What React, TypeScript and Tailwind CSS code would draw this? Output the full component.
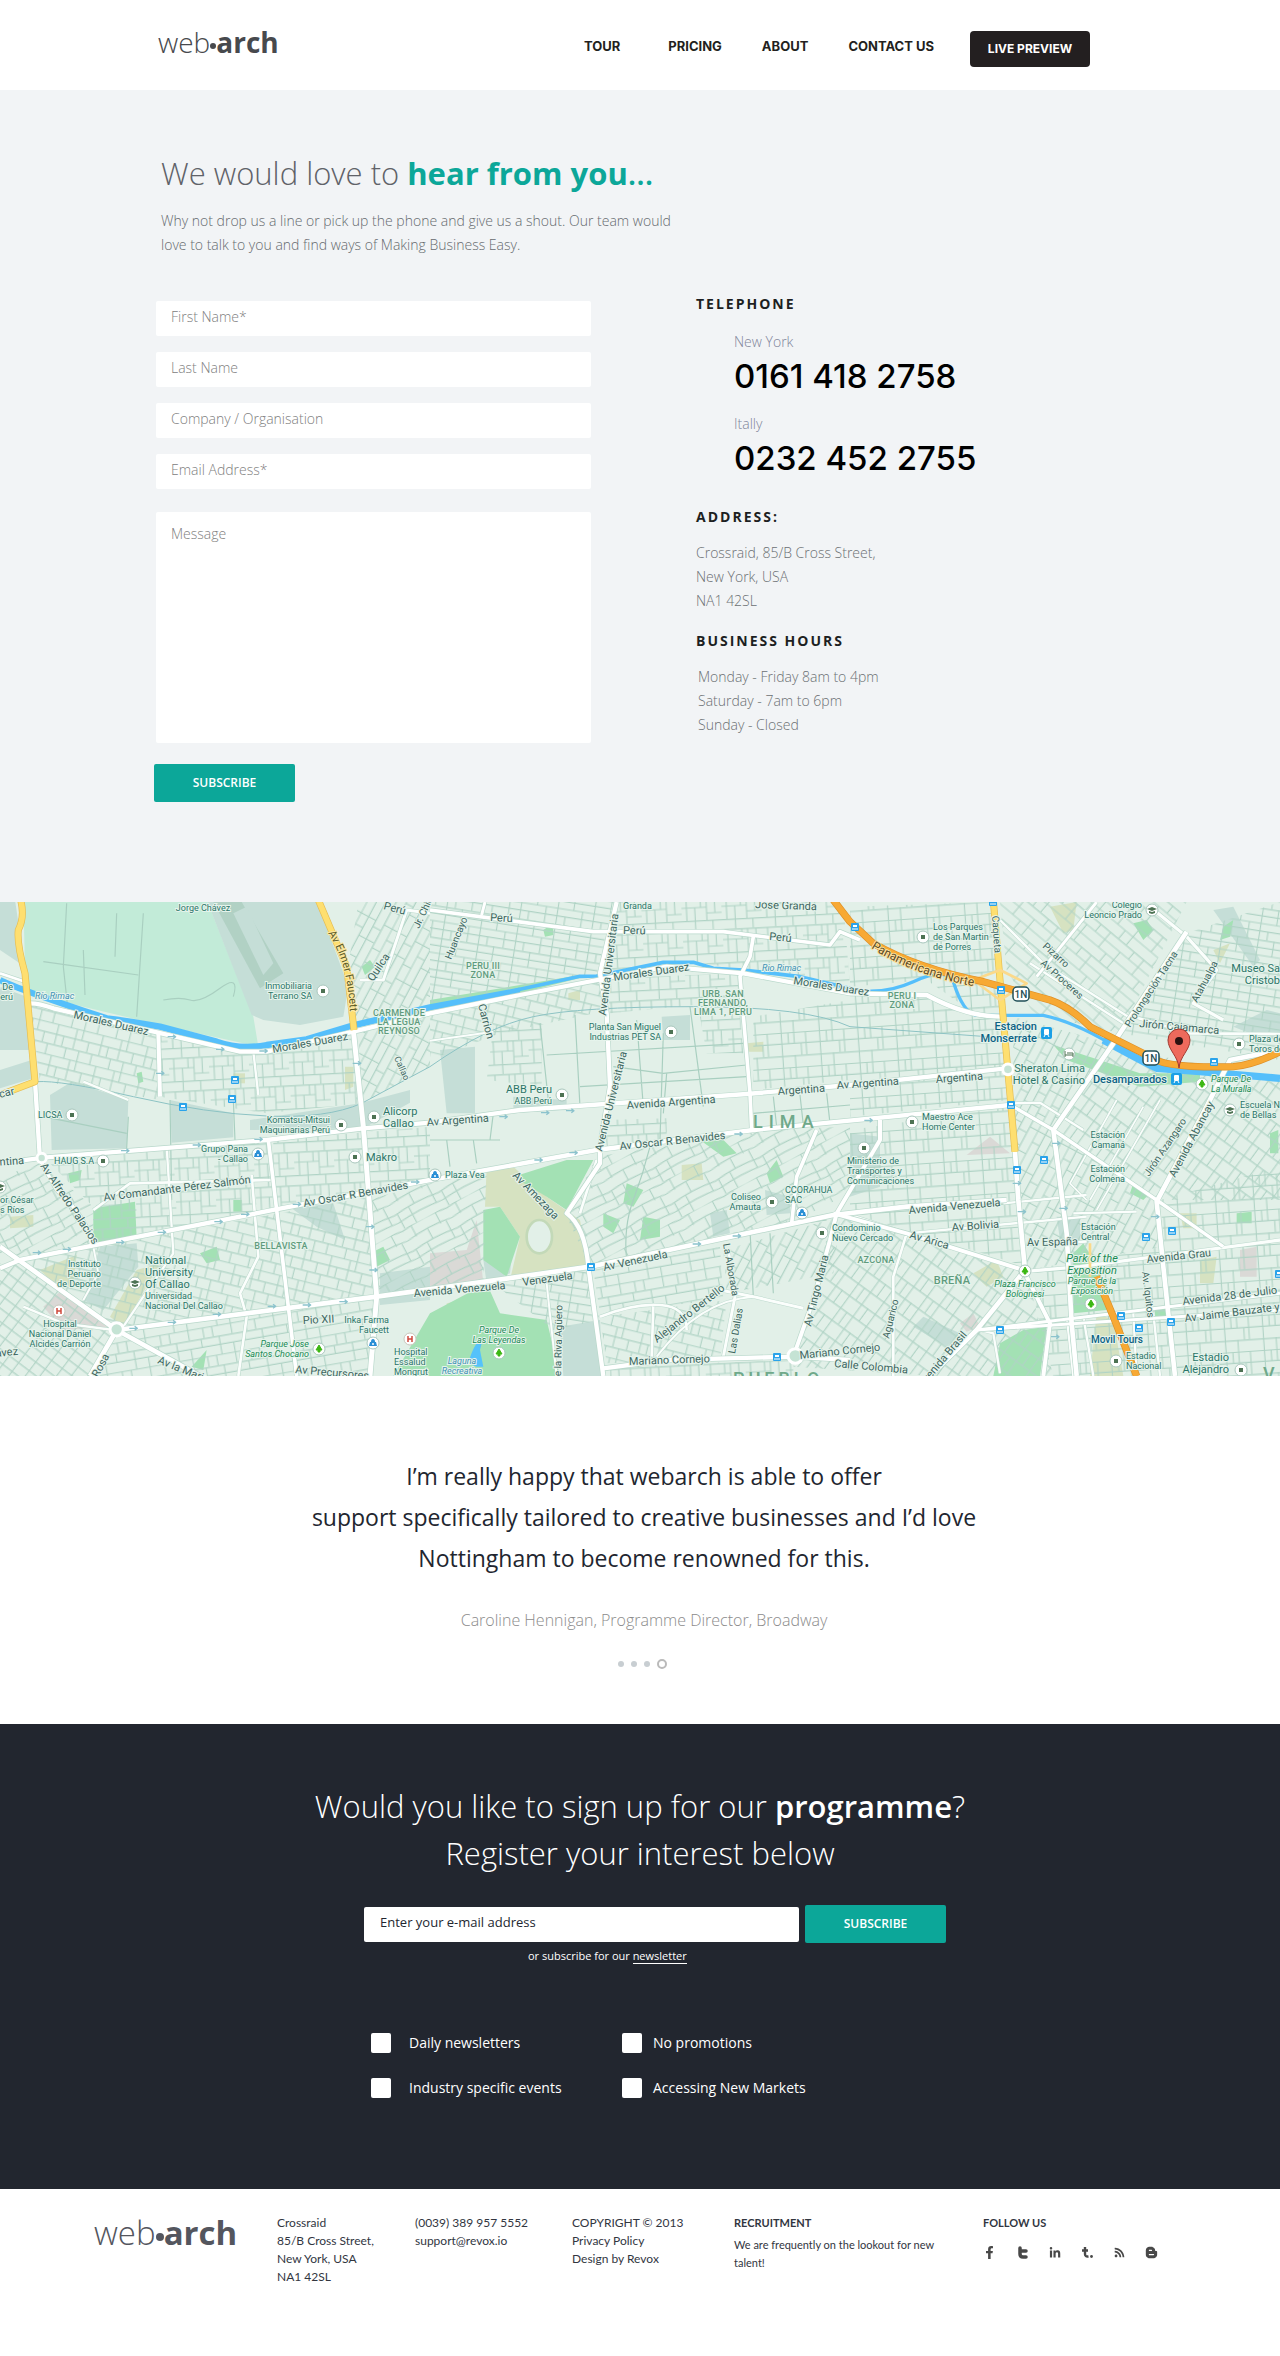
import React from "react";
import { FaFacebookF, FaLinkedinIn, FaBloggerB, FaRss } from "react-icons/fa";

type Road = { d: string; w?: number };

/* Map geometry is drawn on a grid three times finer than the labels. */
const districts: { pts: string; tile: string }[] = [
  { pts: "90,310 470,400 480,600 250,560 120,545", tile: "a" },
  { pts: "480,400 700,455 1060,400 1085,610 800,640 480,590", tile: "b" },
  { pts: "1075,6 1290,6 1290,320 1070,380 1035,260", tile: "c" },
  { pts: "1075,400 1290,330 1290,500 1085,610", tile: "c" },
  { pts: "0,830 120,790 280,920 280,1040 60,1080 0,1060", tile: "d" },
  { pts: "130,770 810,720 820,930 280,1040 280,920", tile: "b" },
  { pts: "280,1040 1110,890 1130,1190 340,1290 60,1080", tile: "a" },
  { pts: "820,720 1290,680 1290,840 820,930", tile: "b" },
  { pts: "1100,900 1290,850 1460,810 1450,1150 1130,1190", tile: "d" },
  { pts: "0,1090 60,1080 340,1290 270,1428 0,1428", tile: "e" },
  { pts: "340,1300 1130,1190 1110,1428 270,1428", tile: "f" },
  { pts: "1290,6 1840,6 1790,225 1560,270 1290,310", tile: "g" },
  { pts: "1840,6 2530,6 2550,260 2080,185 1800,225", tile: "b" },
  { pts: "1290,340 1800,235 1830,330 1500,400 1290,480", tile: "a" },
  { pts: "1820,235 2220,220 2230,320 2080,315 1830,340", tile: "b" },
  { pts: "1480,380 1625,370 1625,560 1460,540", tile: "b" },
  { pts: "2260,350 2550,300 2550,540 2260,570", tile: "h" },
  { pts: "2100,350 2220,340 2230,460 2120,460", tile: "b" },
  { pts: "1790,770 2250,690 2550,680 2550,880 2370,970 1770,1100 1700,950", tile: "d" },
  { pts: "1810,660 2000,655 2000,730 1820,740", tile: "b" },
  { pts: "1780,1110 2160,1040 2170,1200 1960,1220 1800,1240", tile: "f" },
  { pts: "1480,1150 1760,1110 1800,1260 1660,1290", tile: "g" },
  { pts: "1800,1250 2180,1200 2160,1380 1820,1390", tile: "a" },
  { pts: "2170,1050 2520,950 2500,1120 2180,1180", tile: "c" },
  { pts: "2500,940 3070,1110 2920,1300 2800,1428 2380,1400", tile: "i" },
  { pts: "1830,1400 2380,1380 2380,1428 1830,1428", tile: "b" },
  { pts: "2550,20 2980,6 3010,340 2930,345 2780,240 2550,260", tile: "h" },
  { pts: "3000,6 3560,6 3360,400 3100,340 3020,210", tile: "j" },
  { pts: "3560,100 3840,6 3840,480 3360,400", tile: "g" },
  { pts: "2550,280 2780,280 2940,350 3010,360 3030,600 2550,650", tile: "h" },
  { pts: "2550,690 3030,620 3080,1100 2550,940", tile: "h" },
  { pts: "3040,350 3330,430 3160,690 3040,620", tile: "c" },
  { pts: "3340,440 3840,540 3840,900 3470,900 3170,690", tile: "i" },
  { pts: "3040,620 3170,700 3470,910 3490,1040 3080,1110", tile: "c" },
  { pts: "3080,1110 3490,1040 3520,1428 3160,1428", tile: "h" },
  { pts: "3480,900 3840,800 3840,1428 3530,1428", tile: "h" },
  { pts: "2800,1428 3080,1120 3160,1428", tile: "i" },
];

const greyAreas = [
  "620,0 950,0 1045,260 1030,350 900,375 790,360 755,345",
  "0,0 45,0 75,200 0,150",
  "0,260 80,290 90,450 0,450",
  "0,510 95,480 100,535 0,565",
  "150,585 215,545 385,600 380,745 155,750",
  "510,600 700,640 700,712 515,728",
  "750,660 1080,610 1230,570 1230,608 1090,685 750,690",
  "875,925 1000,910 1035,1020 950,980",
  "300,1040 410,1030 415,1100 310,1230 250,1200",
  "1320,450 1425,440 1425,640 1340,640",
  "1985,350 2070,345 2070,420 1990,420",
  "1540,590 1700,600 1700,630 1540,640",
  "1450,1080 1540,1030 1530,1120 1460,1150",
  "1680,1280 1800,1260 1810,1428 1690,1428",
  "2130,940 2180,930 2190,1000 2140,1010",
  "2550,700 2640,710 2640,860 2550,890",
  "3640,30 3700,20 3780,180 3760,200",
  "3700,380 3800,330 3840,340 3840,420 3750,400",
  "3170,950 3240,950 3240,1020 3180,1020",
  "2295,870 2370,890 2370,940 2300,945",
  "1140,1120 1290,1100 1290,1200 1140,1215",
  "2770,1250 2880,1300 2840,1340 2740,1280",
];

const greenAreas = [
  "280,925 405,905 410,1015 280,1040",
  "1290,1240 1460,1150 1500,1240 1640,1260 1680,1428 1180,1428",
  "1450,930 1500,920 1560,1010 1520,1130 1450,1080",
  "1085,200 1110,180 1125,200 1095,225",
  "600,1060 650,1040 660,1080 620,1090",
  "3220,1060 3250,1030 3280,1080 3320,1160 3320,1230 3220,1240",
  "3000,1330 3070,1290 3140,1280 3120,1428 2980,1428",
  "2300,820 2330,780 2350,830 2310,850",
  "1930,950 1980,960 1980,1010 1920,1020",
  "1810,940 1860,960 1840,1000 1810,980",
  "1880,850 1930,870 1900,920 1870,910",
  "3400,850 3450,880 3430,900 3390,880",
  "1290,300 1560,255 1740,225 1740,234 1560,280 1290,314",
  "3160,435 3420,520 3600,520 3600,545 3420,560 3200,480",
  "3400,70 3440,60 3460,90 3430,120",
  "3670,80 3700,60 3690,110 3660,120",
  "1110,1060 1150,1040 1170,1080 1130,1100",
  "205,820 245,810 240,840 210,850",
  "2100,720 2150,700 2210,760 2170,770",
  "700,900 725,900 725,935 700,935",
  "410,520 425,515 430,545 415,550",
  "1630,90 1660,70 1660,105 1635,110",
  "3810,700 3835,690 3835,760 3810,760",
  "3710,940 3755,935 3755,970 3710,970",
  "3465,1225 3505,1220 3505,1255 3465,1260",
  "575,1400 620,1350 610,1410",
  "1540,830 1700,780 1780,780 1700,930 1640,890",
];

const sandAreas = [
  "1460,805 1540,800 1640,890 1740,960 1765,1095 1530,1140 1560,1010 1500,920 1455,920",
  "410,1110 480,1090 370,1280 330,1250",
  "30,950 100,945 100,980 30,985",
  "120,1110 230,1065 220,1150 180,1170",
  "1035,500 1060,500 1060,560 1035,570",
  "2240,430 2290,425 2290,455 2240,455",
  "2045,795 2105,790 2110,840 2045,840",
  "3150,20 3230,6 3220,90 3190,100",
  "2920,1120 2990,1080 3010,1130 2960,1160",
  "3600,1080 3650,1070 3640,1150 3600,1150",
  "3290,1240 3340,1260 3370,1428 3270,1428",
  "3640,150 3690,130 3660,190",
  "3540,940 3590,940 3590,985 3550,985",
  "1705,280 1740,270 1740,300 1705,300",
  "700,520 735,520 735,550 700,550",
  "1340,1210 1440,1190 1430,1220 1340,1225",
];

const roseAreas = [
  "180,1175 325,1280 190,1290 130,1220",
  "1290,1060 1400,1050 1430,960 1450,1150 1290,1160",
  "2970,710 3030,760 2900,765",
  "3720,1050 3770,1040 3770,1130 3720,1130",
  "2880,1270 2920,1240 2940,1280 2900,1295",
];

const alleys = [
  "M200,10 190,200 205,340 M130,185 415,225 M250,150 255,285 M350,40 345,170 M430,40 410,350",
  "M490,300 Q540,290 570,300 T660,265 700,290",
  "M1620,370 1645,600 M1725,345 1740,620 M1640,465 2230,430 M1840,500 1990,520 2240,495 M1980,720 1990,400",
  "M1910,360 1930,620 M2070,320 2110,620 M2000,520 1990,640 M1740,560 2240,530",
  "M510,600 515,900 M700,600 705,720 M385,650 380,745 M130,650 380,700",
  "M1880,1080 Q1870,980 1900,900 T1950,740",
  "M1290,720 1500,720 M1470,720 1480,640 M1340,720 1350,800 M1420,720 1430,790",
  "M2200,1000 2480,960 M2310,1000 2320,1180 M2250,990 2260,1190",
  "M2320,590 2330,680 M2400,585 2410,675 M2480,580 2490,670 M2260,640 2550,615",
];

const rails = [
  "M110,545 Q180,540 400,590 T800,648 1085,610 L1290,500 Q1460,380 1600,350 T2080,320 2550,380 L2960,410",
];

const minorRoads: Road[] = [
  { d: "M760,455 775,585" },
  { d: "M250,545 385,600" },
  { d: "M755,825 775,1070 720,1180 740,1250 715,1428", w: 8 },
  { d: "M430,1190 370,1280" },
  { d: "M500,740 520,1060 430,1190", w: 7 },
  { d: "M280,1040 295,1120 250,1200", w: 6 },
  { d: "M280,930 390,850 820,840", w: 8 },
  { d: "M70,1220 190,1270 340,1290", w: 7 },
  { d: "M1080,240 1150,240 1220,30 1290,40", w: 9 },
  { d: "M1740,940 1790,780", w: 8 },
  { d: "M1960,1220 1955,1370 M1800,1250 Q1900,1210 1980,1215 T2060,1290", w: 8 },
  { d: "M2185,1050 2205,1190 2170,1370", w: 9 },
  { d: "M2160,1170 2260,1190 2410,1225", w: 9 },
  { d: "M2260,1190 Q2100,1200 1970,1370", w: 6 },
  { d: "M1290,422 1480,395", w: 6 },
  { d: "M1640,1150 1670,1428", w: 6 },
  { d: "M3220,940 3410,935 M3010,910 3260,885 M2720,1000 3260,950 M3180,1030 3260,1025", w: 7 },
  { d: "M3070,1115 3240,1100 3840,1020", w: 10 },
  { d: "M3200,1250 3220,1428 M3250,1250 3280,1428 M3400,1240 3410,1428 M3460,1240 3480,1428", w: 7 },
  { d: "M2550,945 2720,1000 2680,1130 2680,1428", w: 8 },
  { d: "M3000,60 3130,190 3400,360 M3090,190 3370,370", w: 7 },
  { d: "M3000,1420 2980,1300 2940,1290", w: 7 },
  { d: "M3260,900 3210,850 3350,600 M3270,900 3430,620 M3290,930 3480,600", w: 5 },
  { d: "M3040,610 3120,608 3250,690", w: 7 },
  { d: "M3400,350 3570,400 3840,402", w: 8 },
  { d: "M3450,20 3560,110 3650,210 3580,310 3670,360", w: 10 },
];

const majorRoads: Road[] = [
  { d: "M0,220 75,245", w: 8 },
  { d: "M90,310 Q120,310 160,325 L720,455 800,455 1060,395 1290,340 1560,285 2000,200 2230,220 2550,280 2780,285 Q2900,350 3000,350", w: 13 },
  { d: "M475,400 480,590", w: 12 },
  { d: "M1060,390 1090,680 1130,1190 1110,1428", w: 15 },
  { d: "M105,545 120,780 M0,790 130,773 800,720 1090,685 1290,668 1560,630 2240,582 2550,555 3020,505", w: 13 },
  { d: "M120,780 170,870 Q270,960 275,1040", w: 10 },
  { d: "M0,1105 60,1080 820,930 1290,840 1790,750 2260,690 3030,615", w: 13 },
  { d: "M805,720 830,930 890,1428", w: 11 },
  { d: "M0,1040 350,1290 600,1428", w: 14 },
  { d: "M270,1428 350,1290 1130,1190 1560,1130 1770,1100 2500,945 2720,920 3020,900", w: 14 },
  { d: "M1850,6 1800,220 1820,340 1830,560 1800,740 1800,790 1700,940 Q1755,980 1765,1100 L1810,1428", w: 13 },
  { d: "M1290,30 1780,95 2170,95 2490,135 2520,95 2580,120", w: 11 },
  { d: "M2260,110 2250,170 2220,230 2250,580 2255,690", w: 11 },
  { d: "M1455,6 1445,45", w: 9 },
  { d: "M2450,690 2390,830 2375,970", w: 11 },
  { d: "M2640,660 2640,720 2510,940 2490,1020 2440,1200 2380,1370", w: 12 },
  { d: "M1810,1405 2000,1380 2380,1370 2550,1380", w: 13 },
  { d: "M2500,940 2720,1000 3070,1110 3150,1270 3130,1428", w: 12 },
  { d: "M3035,610 3055,900 3075,1110 2930,1290 2790,1428", w: 14 },
  { d: "M2930,1290 3260,1250 3840,1180 M2930,1290 3840,1230", w: 9 },
  { d: "M3560,95 3340,430 3160,690 3200,1000 3215,1270 3230,1428", w: 14 },
  { d: "M3040,620 3160,690 3470,900 3670,1040", w: 10 },
  { d: "M3840,450 3690,480 3620,620 3470,905 3490,1100 3525,1428", w: 14 },
  { d: "M3290,6 3110,230", w: 9 },
];

const arrows = [
  [515, 410], [660, 448], [790, 453], [480, 520], [1070, 490], [375, 752], [590, 735], [775, 718], [485, 997], [360, 1027],
  [110, 1058], [200, 1048], [655, 965], [735, 943], [890, 913], [1245, 846], [1110, 980], [1120, 1110], [400, 1285], [515, 1267],
  [650, 1243], [815, 1219], [920, 1215], [1030, 1205], [1510, 650], [1635, 638], [1710, 632], [1615, 780], [1720, 758], [2215, 702],
  [2090, 1032], [2210, 1008], [2605, 661], [3050, 850], [3065, 935], [3190, 925], [3168, 730], [3465, 950], [3165, 1310],
];

type Label = {
  t: string | string[];
  x: number;
  y: number;
  s?: number;
  r?: number;
  a?: "start" | "middle" | "end";
  k?: "road" | "place" | "area" | "park" | "water" | "station";
};

const labels: Label[] = [
  { t: "Jorge Chávez", x: 203, y: 9, s: 9, a: "middle" },
  { t: ["Inmobiliaria", "Terrano SA"], x: 312, y: 87, s: 9, a: "end" },
  { t: ["› De", "erú"], x: 13, y: 88, s: 9, a: "end" },
  { t: "LICSA", x: 38, y: 216, s: 9 },
  { t: "HAUG S.A", x: 54, y: 262, s: 9 },
  { t: ["Komatsu-Mitsui", "Maquinarias Perú"], x: 330, y: 221, s: 9, a: "end" },
  { t: ["Grupo Pana", "- Callao"], x: 248, y: 250, s: 9, a: "end" },
  { t: ["Alicorp", "Callao"], x: 383, y: 213, s: 11 },
  { t: "Makro", x: 366, y: 259, s: 11 },
  { t: ["or César", "s Ríos"], x: 0, y: 301, s: 9 },
  { t: ["Instituto", "Peruano", "de Deporte"], x: 101, y: 365, s: 9, a: "end" },
  { t: ["National", "University", "Of Callao"], x: 145, y: 362, s: 11 },
  { t: ["Universidad", "Nacional Del Callao"], x: 145, y: 397, s: 9 },
  { t: ["Hospital", "Nacional Daniel", "Alcides Carrión"], x: 60, y: 425, s: 9, a: "middle" },
  { t: ["Inka Farma", "Faucett"], x: 389, y: 421, s: 9, a: "end" },
  { t: ["Hospital", "Essalud", "Mongrut"], x: 394, y: 453, s: 9 },
  { t: ["Planta San Miguel", "Industrias PET SA"], x: 661, y: 128, s: 9, a: "end" },
  { t: "ABB Peru", x: 552, y: 191, s: 11, a: "end" },
  { t: "ABB Perú", x: 552, y: 202, s: 9, a: "end" },
  { t: "Plaza Vea", x: 445, y: 276, s: 9 },
  { t: "Granda", x: 623, y: 7, s: 9 },
  { t: ["Coliseo", "Amauta"], x: 761, y: 298, s: 9, a: "end" },
  { t: ["CCORAHUA", "SAC"], x: 785, y: 291, s: 9 },
  { t: ["Ministerio de", "Transportes y", "Comunicaciones"], x: 847, y: 262, s: 9 },
  { t: ["Condominio", "Nuevo Cercado"], x: 832, y: 329, s: 9 },
  { t: ["Los Parques", "de San Martin", "de Porres"], x: 933, y: 28, s: 9 },
  { t: ["Colegio", "Leoncio Prado"], x: 1142, y: 6, s: 9, a: "end" },
  { t: ["Museo Sa", "Cristob"], x: 1280, y: 70, s: 11, a: "end" },
  { t: ["Plaza de", "Toros de"], x: 1249, y: 140, s: 9 },
  { t: ["Escuela N", "de Bellas"], x: 1240, y: 206, s: 9 },
  { t: ["Sheraton Lima", "Hotel & Casino"], x: 1085, y: 170, s: 11, a: "end" },
  { t: ["Maestro Ace", "Home Center"], x: 922, y: 218, s: 9 },
  { t: ["Estación", "Camaná"], x: 1125, y: 236, s: 9, a: "end" },
  { t: ["Estación", "Colmena"], x: 1125, y: 270, s: 9, a: "end" },
  { t: ["Estación", "Central"], x: 1081, y: 328, s: 9 },
  { t: ["Estadio", "Nacional"], x: 1126, y: 457, s: 9 },
  { t: ["Estadio", "Alejandro"], x: 1229, y: 459, s: 11, a: "end" },
  { t: ["Estacion", "Monserrate"], x: 1037, y: 128, s: 11, a: "end", k: "station" },
  { t: "Desamparados", x: 1167, y: 181, s: 11, a: "end", k: "station" },
  { t: "Movil Tours", x: 1091, y: 441, s: 10, k: "station" },
  { t: ["Parque Jose", "Santos Chocano"], x: 309, y: 445, s: 9, a: "end", k: "park" },
  { t: ["Parque De", "Las Leyendas"], x: 499, y: 431, s: 9, a: "middle", k: "park" },
  { t: ["Parque De", "La Muralla"], x: 1211, y: 180, s: 9, k: "park" },
  { t: ["Park of the", "Exposition"], x: 1092, y: 360, s: 11, a: "middle", k: "park" },
  { t: ["Parque de la", "Exposición"], x: 1092, y: 382, s: 9, a: "middle", k: "park" },
  { t: ["Plaza Francisco", "Bolognesi"], x: 1025, y: 385, s: 9, a: "middle", k: "park" },
  { t: ["Laguna", "Recreativa"], x: 462, y: 462, s: 9, a: "middle", k: "water" },
  { t: "Río Rimac", x: 35, y: 97, s: 9, k: "water" },
  { t: "Rio Rimac", x: 762, y: 69, s: 9, k: "water" },
  { t: ["CARMEN DE", "LA LEGUA", "REYNOSO"], x: 399, y: 114, s: 9, a: "middle", k: "area" },
  { t: "BELLAVISTA", x: 281, y: 347, s: 9, a: "middle", k: "area" },
  { t: ["PERU III", "ZONA"], x: 483, y: 67, s: 9, a: "middle", k: "area" },
  { t: ["URB. SAN", "FERNANDO,", "LIMA 1, PERU"], x: 723, y: 95, s: 9, a: "middle", k: "area" },
  { t: ["PERU I", "ZONA"], x: 902, y: 97, s: 9, a: "middle", k: "area" },
  { t: "AZCONA", x: 876, y: 361, s: 9, a: "middle", k: "area" },
  { t: "BREÑA", x: 952, y: 382, s: 11, a: "middle", k: "area" },
  { t: "Morales Duarez", x: 73, y: 116, r: 13, k: "road" },
  { t: "Morales Duarez", x: 273, y: 151, r: -10, k: "road" },
  { t: "Morales Duarez", x: 614, y: 79, r: -8, k: "road" },
  { t: "Morales Duarez", x: 793, y: 82, r: 9, k: "road" },
  { t: "Quilca", x: 373, y: 80, r: -56, k: "road" },
  { t: "Callao", x: 394, y: 156, s: 9, r: 66, k: "road" },
  { t: "Jr. Chic", x: 419, y: 27, s: 10, r: -65, k: "road" },
  { t: "Perú", x: 383, y: 7, r: 15, k: "road" },
  { t: "entina", x: -6, y: 264, r: -4, k: "road" },
  { t: "car", x: 0, y: 196, r: -14, k: "road" },
  { t: "avez", x: -4, y: 455, r: -6, k: "road" },
  { t: "Av Alfredo Palacios", x: 40, y: 264, r: 56, k: "road" },
  { t: "Av Comandante Pérez Salmón", x: 104, y: 299, r: -7, k: "road" },
  { t: "Av Oscar R Benavides", x: 304, y: 305, r: -10, k: "road" },
  { t: "Av Oscar R Benavides", x: 620, y: 248, r: -6, k: "road" },
  { t: "Pio XII", x: 303, y: 422, r: -3, k: "road" },
  { t: "Av la Marina", x: 157, y: 461, r: 22, k: "road" },
  { t: "Av Precursores", x: 295, y: 471, r: 5, k: "road" },
  { t: "Rosa", x: 98, y: 476, r: -62, k: "road" },
  { t: "Avenida Venezuela", x: 414, y: 395, r: -5, k: "road" },
  { t: "Venezuela", x: 523, y: 384, r: -8, k: "road" },
  { t: "Av Venezuela", x: 604, y: 369, r: -12, k: "road" },
  { t: "Perú", x: 490, y: 19, r: 3, k: "road" },
  { t: "Perú", x: 623, y: 32, r: 1, k: "road" },
  { t: "Perú", x: 769, y: 38, r: 5, k: "road" },
  { t: "Jose Granda", x: 755, y: 6, r: 2, k: "road" },
  { t: "Huancayo", x: 451, y: 58, s: 10, r: -68, k: "road" },
  { t: "Avenida Universitaria", x: 606, y: 114, r: -83, k: "road" },
  { t: "Avenida Universitaria", x: 602, y: 250, r: -76, k: "road" },
  { t: "Carrion", x: 478, y: 103, r: 75, k: "road" },
  { t: "Av Argentina", x: 427, y: 224, r: -4, k: "road" },
  { t: "Avenida Argentina", x: 627, y: 207, r: -4, k: "road" },
  { t: "Argentina", x: 778, y: 193, r: -4, k: "road" },
  { t: "Av Argentina", x: 837, y: 187, r: -4, k: "road" },
  { t: "Argentina", x: 936, y: 181, r: -4, k: "road" },
  { t: "Av Amezaga", x: 512, y: 274, r: 46, k: "road" },
  { t: "de la Riva Agüero", x: 561, y: 480, s: 10, r: -89, k: "road" },
  { t: "Alejandro Bertello", x: 657, y: 441, r: -38, k: "road" },
  { t: "La Alborada", x: 723, y: 342, s: 10, r: 80, k: "road" },
  { t: "Las Dalias", x: 735, y: 452, s: 10, r: -80, k: "road" },
  { t: "Mariano Cornejo", x: 629, y: 463, r: -2, k: "road" },
  { t: "Mariano Cornejo", x: 800, y: 457, r: -6, k: "road" },
  { t: "Calle Colombia", x: 834, y: 465, r: 5, k: "road" },
  { t: "Av Tingo Maria", x: 811, y: 425, r: -76, k: "road" },
  { t: "Caqueta", x: 992, y: 14, s: 10, r: 86, k: "road" },
  { t: "Pizarro", x: 1042, y: 45, s: 10, r: 42, k: "road" },
  { t: "Av Proceres", x: 1040, y: 62, s: 10, r: 42, k: "road" },
  { t: "Prolongación Tacna", x: 1130, y: 126, s: 10, r: -57, k: "road" },
  { t: "Atahualpa", x: 1197, y: 101, s: 10, r: -62, k: "road" },
  { t: "Jirón Cajamarca", x: 1139, y: 125, r: 5, k: "road" },
  { t: "Jirón Azangaro", x: 1149, y: 275, s: 10, r: -56, k: "road" },
  { t: "Avenida Abancay", x: 1175, y: 276, s: 11, r: -62, k: "road" },
  { t: "Avenida Venezuela", x: 909, y: 312, r: -5, k: "road" },
  { t: "Av Bolivia", x: 952, y: 329, r: -4, k: "road" },
  { t: "Av Arica", x: 909, y: 336, r: 16, k: "road" },
  { t: "Av España", x: 1027, y: 344, r: -1, k: "road" },
  { t: "Avenida Grau", x: 1147, y: 361, r: -6, k: "road" },
  { t: "Avenida 28 de Julio", x: 1183, y: 403, r: -7, k: "road" },
  { t: "Av Jaime Bauzate y", x: 1185, y: 420, r: -7, k: "road" },
  { t: "Av. Iquitos", x: 1142, y: 370, s: 10, r: 83, k: "road" },
  { t: "Aguarico", x: 889, y: 437, s: 10, r: -76, k: "road" },
  { t: "Avenida Brasil", x: 923, y: 486, r: -50, k: "road" },
];

const labelStyle = {
  road: "fill-[#3d665f]",
  place: "fill-[#2b7468]",
  area: "fill-[#5f9b7d] font-medium tracking-wide",
  park: "fill-[#1a8a55] italic",
  water: "fill-[#3f92b5] italic",
  station: "fill-[#0c6284] font-medium",
};

const squares = [
  [323, 89], [72, 213], [103, 259], [341, 223], [374, 215], [355, 255], [671, 130], [562, 193], [772, 300], [822, 331], [923, 35],
  [912, 220], [1239, 142], [1116, 459], [1241, 468], [864, 246],
];
const trees = [[319, 447], [499, 451], [1202, 182], [1025, 369], [1091, 402]];
const hospitals = [[59, 409], [410, 437]];
const schools = [[0, 285], [135, 381], [1152, 8], [1230, 208]];
const shops = [[258, 252], [373, 441], [802, 311], [435, 273]];
const stops = [
  [235, 178], [232, 197], [183, 205], [591, 365], [777, 455], [855, 25], [993, 0], [1001, 88], [1011, 203], [1017, 268], [1044, 258],
  [1214, 160], [1172, 329], [1146, 335], [1000, 428], [1121, 414], [1139, 426], [1171, 420], [1279, 372],
];

const tiles: { id: string; w: number; h: number; r: number; d: string }[] = [
  { id: "a", w: 110, h: 76, r: 14, d: "M0,2H110M0,28H110M0,52H110M20,2V28M52,2V52M84,2V28M36,28V76M70,52V76M100,28V76M8,52V76" },
  { id: "b", w: 96, h: 80, r: -3, d: "M0,2H96M0,26H60M60,40H96M0,58H96M12,2V58M32,26V80M60,2V58M80,2V40M74,58V80M46,2V26" },
  { id: "c", w: 100, h: 84, r: -62, d: "M0,2H100M0,24H100M0,44H100M0,64H100M18,2V24M50,24V44M80,2V64M30,44V84M64,64V84" },
  { id: "d", w: 120, h: 96, r: -28, d: "M0,4Q60,-6 120,4M0,30Q60,20 120,30M0,58Q60,48 120,58M0,78Q60,70 120,78M24,2V30M56,24V54M90,2V30M40,54V96M104,30V78M8,58V96" },
  { id: "e", w: 60, h: 52, r: 37, d: "M0,2H60M0,28H60M16,0V52M44,0V52" },
  { id: "f", w: 104, h: 70, r: -10, d: "M0,2H104M0,22H104M0,46H104M24,2V46M56,22V70M84,2V22M92,46V70M10,46V70" },
  { id: "g", w: 88, h: 76, r: 9, d: "M0,2H88M0,20H88M0,38H88M0,56H88M6,0V76M44,0V38M66,38V76M26,56V76" },
  { id: "h", w: 92, h: 84, r: -4, d: "M0,2H92M0,30H92M0,56H92M8,0V84M38,0V56M66,30V84M54,56V84M24,30V56" },
  { id: "i", w: 76, h: 72, r: 36, d: "M0,2H76M0,38H76M4,0V72M40,0V72M58,0V38M22,38V72" },
  { id: "j", w: 104, h: 72, r: 40, d: "M0,2H104M0,24H104M0,48H104M12,2V48M60,24V72M86,2V24M36,48V72" },
];

function CityMap() {
  return (
    <svg
      role="img"
      aria-label="Map of Lima with our office marked"
      viewBox="0 0 1280 474"
      preserveAspectRatio="xMidYMid slice"
      className="block h-[474px] w-full bg-[#e2f0e8] font-['Roboto',sans-serif]"
    >
      <defs>
        {tiles.map((p) => (
          <pattern key={p.id} id={`blocks-${p.id}`} width={p.w} height={p.h} patternUnits="userSpaceOnUse" patternTransform={`rotate(${p.r}) scale(1.25)`}>
            <path d={p.d} fill="none" stroke="#b0d3c5" strokeWidth="2.7" />
          </pattern>
        ))}
        <path id="faucett" d="M328,31 Q350,65 350,118 V130" />
        <path id="panamericana" d="M871,46 Q920,77 986,86" />
      </defs>

      <g transform="translate(0 -2) scale(0.33333)" fill="none" strokeLinejoin="round">
        <polygon points="70,0 620,0 760,350 775,440 740,432 480,375 250,320 90,280 75,200" fill="#c2ebd8" />
        {greyAreas.map((p) => <polygon key={p} points={p} fill="#c5ded7" />)}
        {sandAreas.map((p) => <polygon key={p} points={p} fill="#d6e2c1" />)}
        {greenAreas.map((p) => <polygon key={p} points={p} fill="#a3e1b4" />)}
        {roseAreas.map((p) => <polygon key={p} points={p} fill="#dad9d6" />)}
        <path d="M640,6 725,6 850,220 780,265Z" fill="#b1d1c4" />
        <path d="M700,40 740,20 820,190 790,225Z" fill="#c5ded7" />
        {districts.map((p) => <polygon key={p.pts} points={p.pts} fill={`url(#blocks-${p.tile})`} />)}
        {alleys.map((d) => <path key={d} d={d} stroke="#a9cfc0" strokeWidth="3.5" />)}
        <ellipse cx="1618" cy="1010" rx="38" ry="50" fill="#e2f0e8" stroke="#c3d9b8" strokeWidth="8" />
        <path d="M1405,1390 Q1420,1330 1450,1310 L1440,1350 1450,1400 1430,1400Z" fill="#55c2fb" />
        {rails.map((d) => <path key={d} d={d} stroke="#8dc3c4" strokeWidth="3" />)}

        <path d="M0,240 Q40,262 250,332 L320,355 Q400,365 480,380 L650,425 Q720,450 800,435 L920,418 1060,376 1290,322 1560,272" stroke="#55bffb" strokeWidth="19" />
        <path d="M1500,284 1560,268 1740,229 1790,228 1990,187 2080,187 2140,205 2230,210 2400,230 2550,265" stroke="#55bffb" strokeWidth="11" />
        <path d="M2540,264 Q2640,290 2740,245 T2860,245 Q2890,340 2930,346 L3130,346 Q3220,365 3330,430" stroke="#55bffb" strokeWidth="10" />
        <path d="M3310,420 Q3400,470 3470,505 L3600,515 3840,535" stroke="#55bffb" strokeWidth="22" />

        {minorRoads.map((r) => <path key={r.d} d={r.d} stroke="#bcd9cd" strokeWidth={(r.w ?? 7) + 3} />)}
        {minorRoads.map((r) => <path key={r.d} d={r.d} stroke="#fbfefc" strokeWidth={r.w ?? 7} />)}
        {majorRoads.map((r) => <path key={r.d} d={r.d} stroke="#b9d8cb" strokeWidth={(r.w ?? 12) + 4} />)}
        {majorRoads.map((r) => <path key={r.d} d={r.d} stroke="#ffffff" strokeWidth={r.w ?? 12} />)}

        <g stroke="#e6bd52" strokeWidth="21">
          <path d="M62,0 Q75,50 55,90 Q50,130 75,220 L105,545 0,585" />
          <path d="M955,0 1040,200 1062,390" />
          <path d="M2980,0 3005,300 3045,755" />
        </g>
        <g stroke="#fedf70" strokeWidth="17">
          <path d="M62,0 Q75,50 55,90 Q50,130 75,220 L105,545 0,585" />
          <path d="M955,0 1040,200 1062,390" />
          <path d="M2980,0 3005,300 3045,755" />
        </g>
        <path d="M2920,240 3000,210 3080,250 3000,300Z M3270,1030 3270,1130" stroke="#fbd98a" strokeWidth="8" />
        <g stroke="#dd8f27" strokeWidth="22">
          <path d="M2500,0 2550,65 2620,130 Q2750,205 2950,245 L3150,300 Q3210,320 3270,380 L3450,470 Q3490,505 3700,500 3760,495 3840,455" />
          <path d="M3290,1130 3340,1250 3410,1428" />
        </g>
        <g stroke="#f7a934" strokeWidth="18">
          <path d="M2500,0 2550,65 2620,130 Q2750,205 2950,245 L3150,300 Q3210,320 3270,380 L3450,470 Q3490,505 3700,500 3760,495 3840,455" />
          <path d="M3290,1130 3340,1250 3410,1428" />
        </g>
        {arrows.map(([x, y]) => (
          <path key={`${x}-${y}`} d={`M${x - 12},${y}H${x + 10}M${x + 4},${y - 6}l8,6l-8,6`} stroke="#8cc3cd" strokeWidth="4" />
        ))}
        {[[125, 774, 14], [350, 1288, 20], [2386, 1368, 22], [3024, 508, 16]].map(([x, y, r]) => (
          <circle key={x} cx={x} cy={y} r={r} fill="#c5e3d4" stroke="#fff" strokeWidth="9" />
        ))}
      </g>

      {squares.map(([x, y]) => (
        <g key={`${x}-${y}`}>
          <circle cx={x} cy={y} r="6" fill="#fff" stroke="#a9c7bd" />
          <rect x={x - 2} y={y - 2} width="4" height="4" fill="#4d7253" />
        </g>
      ))}
      {trees.map(([x, y]) => (
        <g key={`${x}-${y}`}>
          <circle cx={x} cy={y} r="6" fill="#fff" stroke="#a9c7bd" />
          <path d={`M${x},${y - 4}l3,5h-2v2h-2v-2h-2z`} fill="#3cb714" stroke="#3cb714" />
        </g>
      ))}
      {hospitals.map(([x, y]) => (
        <g key={`${x}-${y}`}>
          <circle cx={x} cy={y} r="6" fill="#fff" stroke="#c9c7bd" />
          <path d={`M${x - 2},${y - 3}v6M${x + 2},${y - 3}v6M${x - 2},${y}h4`} stroke="#cf4a3e" strokeWidth="1.5" />
        </g>
      ))}
      {schools.map(([x, y]) => (
        <g key={`${x}-${y}`}>
          <circle cx={x} cy={y} r="6" fill="#fff" stroke="#a9c7bd" />
          <path d={`M${x - 5},${y - 1}l5,-2l5,2l-5,2zM${x - 3},${y + 1}l3,1l3,-1v2l-3,1l-3,-1z`} fill="#4d7253" />
        </g>
      ))}
      {shops.map(([x, y]) => (
        <g key={`${x}-${y}`}>
          <circle cx={x} cy={y} r="6" fill="#fff" stroke="#a9c7bd" />
          <path d={`M${x - 3},${y - 1}h6l1,4h-8zM${x - 2},${y - 1}q0,-3 2,-3t2,3`} fill="#2a8fd6" />
          <circle cx={x} cy={y + 1} r="1" fill="#fff" />
        </g>
      ))}
      {stops.map(([x, y]) => (
        <g key={`${x}-${y}`}>
          <rect x={x - 4} y={y - 4} width="8" height="8" rx="1" fill="#2aa3ea" />
          <rect x={x - 2} y={y - 2} width="4" height="2" fill="#fff" />
          <path d={`M${x - 3},${y + 2}h6`} stroke="#fff" />
        </g>
      ))}
      {[[1046, 131], [1176, 177]].map(([x, y]) => (
        <g key={x}>
          <rect x={x - 5} y={y - 6} width="11" height="12" rx="2" fill="#1ba0e6" />
          <rect x={x - 2} y={y - 4} width="5" height="6" rx="1" fill="#fff" />
          <path d={`M${x - 2},${y + 4}l1,-2M${x + 3},${y + 4}l-1,-2`} stroke="#fff" />
        </g>
      ))}
      <g>
        <circle cx="1069" cy="152" r="6" fill="#fff" stroke="#a9c7bd" />
        <path d="M1065,149v6M1065,153h8v2M1067,151h6v2" fill="none" stroke="#4d7253" />
      </g>

      {labels.map((l, i) => {
        const lines = Array.isArray(l.t) ? l.t : [l.t];
        const size = l.s ?? 11;
        return (
          <text
            key={i}
            x={l.x}
            y={l.y}
            textAnchor={l.a ?? "start"}
            transform={l.r ? `rotate(${l.r} ${l.x} ${l.y})` : undefined}
            fontSize={size}
            stroke="#e6f4ec"
            strokeWidth="2"
            paintOrder="stroke"
            className={labelStyle[l.k ?? "place"]}
          >
            {lines.map((line, n) => (
              <tspan key={n} x={l.x} dy={n ? (size > 9 ? 12 : l.k === "area" ? 9 : 10) : 0}>{line}</tspan>
            ))}
          </text>
        );
      })}
      <text fontSize="11" stroke="#fbe9a4" strokeWidth="2" paintOrder="stroke" className="fill-[#5b5a25]">
        <textPath href="#faucett">Av Elmer Faucett</textPath>
      </text>
      <text fontSize="12" stroke="#fbdf9c" strokeWidth="2" paintOrder="stroke" className="fill-[#5b4a25]">
        <textPath href="#panamericana">Panamericana Norte</textPath>
      </text>
      <text x="753" y="226" fontSize="18" className="fill-[#6fa98a] font-medium tracking-[6px]">LIMA</text>
      <text x="733" y="483" fontSize="18" className="fill-[#6fa98a] font-medium tracking-[4px]">PUEBLO</text>
      <text x="1263" y="478" fontSize="18" className="fill-[#6fa98a] font-medium">V</text>

      {[[1021, 92], [1151, 156]].map(([x, y]) => (
        <g key={x}>
          <rect x={x - 8} y={y - 7} width="16" height="14" rx="4" fill="#fff" stroke="#1f4f57" strokeWidth="1.5" />
          <text x={x} y={y + 4} textAnchor="middle" fontSize="10" className="fill-[#1f4f57] font-medium">1N</text>
        </g>
      ))}
      <path d="M1179,166 C1178,154 1168,148 1168,138 A11,11 0 0 1 1190,138 C1190,148 1180,154 1179,166Z" fill="#ee6a5c" stroke="#a3392f" />
      <circle cx="1179" cy="139" r="4" fill="#2b1210" />
    </svg>
  );
}

function Logo({ large = false }: { large?: boolean }) {
  return (
    <a
      href="#"
      aria-label="web arch home"
      className={
        large
          ? "flex items-center text-[33px] leading-[38px] text-[#54565e]"
          : "flex items-center text-[28px] leading-10 text-[#47494d]"
      }
    >
      <span className="font-light">web</span>
      <span className={large ? "mt-2 size-2 rounded-full bg-current" : "mt-2 size-1.5 rounded-full bg-current"} />
      <span className="font-bold">arch</span>
    </a>
  );
}

const fieldClass =
  "h-[35px] w-full rounded-xs bg-white px-[15px] pb-1 text-sm font-light text-[#333] placeholder:text-[#808080] placeholder:opacity-100";

const sectionTitleClass = "text-sm leading-6 font-bold tracking-[2px] text-[#1d1f22]";

function Header() {
  return (
    <header className="bg-white">
      <div className="mx-auto flex h-[90px] max-w-[1280px] items-center justify-between pr-[190px] pb-1.5 pl-[158px]">
        <Logo />
        <nav className="mt-2.5 flex items-center font-['Inter',sans-serif] text-[13px] font-bold text-[#231f20]">
          <a href="#" className="mr-12">TOUR</a>
          <a href="#" className="mr-10">PRICING</a>
          <a href="#" className="mr-10">ABOUT</a>
          <a href="#" className="mr-9">CONTACT US</a>
          <button type="button" className="mt-1 h-9 w-[120px] rounded-sm bg-[#231f20] text-xs font-bold text-white">
            LIVE PREVIEW
          </button>
        </nav>
      </div>
    </header>
  );
}

function Contact() {
  return (
    <section className="bg-[#f2f4f6]">
      <div className="mx-auto max-w-[1280px] px-[154px] pt-[63px] pb-[100px]">
        <h1 className="pl-[7px] text-[31px] leading-10 font-light text-[#606268]">
          We would love to <span className="font-bold text-[#0ca799]">hear from you</span>
          <span className="font-semibold text-[#0ca799]">...</span>
        </h1>
        <p className="mt-4 max-w-[530px] pl-[7px] text-sm leading-6 font-light text-[#666b6f]">
          Why not drop us a line or pick up the phone and give us a shout. Our team would love to talk to you and find ways of Making
          Business Easy.
        </p>
        <div className="mt-[35px] flex">
          <form className="w-[437px] pt-[9px] pl-0.5" onSubmit={(e) => e.preventDefault()}>
            <div className="flex flex-col gap-4">
              <input aria-label="First Name" placeholder="First Name*" className={fieldClass} />
              <input aria-label="Last Name" placeholder="Last Name" className={fieldClass} />
              <input aria-label="Company / Organisation" placeholder="Company / Organisation" className={fieldClass} />
              <input aria-label="Email Address" type="email" placeholder="Email Address*" className={fieldClass} />
            </div>
            <textarea
              aria-label="Message"
              placeholder="Message"
              className="mt-[23px] block h-[231px] w-full resize-none rounded-xs bg-white px-[15px] py-3 text-sm font-light text-[#333] placeholder:text-[#808080] placeholder:opacity-100"
            />
            <button type="submit" className="mt-[21px] -ml-0.5 block h-[38px] w-[141px] rounded-xs bg-[#0ca799] text-xs font-semibold text-white">
              SUBSCRIBE
            </button>
          </form>
          <div className="ml-[105px] text-sm leading-6 font-light text-[#6b7073]">
            <h2 className={sectionTitleClass}>TELEPHONE</h2>
            <dl className="mt-3.5 pl-[38px] text-[#7f859a]">
              <dt>New York</dt>
              <dd className="mt-0.5 font-['Inter',sans-serif] text-[33px] leading-10 font-medium text-black">0161 418 2758</dd>
              <dt className="mt-4">Itally</dt>
              <dd className="mt-0.5 font-['Inter',sans-serif] text-[33px] leading-10 font-medium text-black">0232 452 2755</dd>
            </dl>
            <div className="mt-[27px]">
              <h2 className={sectionTitleClass}>ADDRESS:</h2>
            </div>
            <address className="mt-3 not-italic">
              Crossraid, 85/B Cross Street,
              <br />
              New York, USA
              <br />
              NA1 42SL
            </address>
            <div className="mt-4">
              <h2 className={sectionTitleClass}>BUSINESS HOURS</h2>
            </div>
            <p className="mt-3 pl-0.5">
              Monday - Friday 8am to 4pm
              <br />
              Saturday - 7am to 6pm
              <br />
              Sunday - Closed
            </p>
          </div>
        </div>
      </div>
    </section>
  );
}

function Testimonial() {
  return (
    <section className="bg-white px-4 pt-20 pb-[55px] text-center">
      <div className="pl-2">
        <blockquote className="text-[23px] leading-[41px] text-[#22262f]">
          I’m really happy that webarch is able to offer
          <br />
          support specifically tailored to creative businesses and I’d love
          <br />
          Nottingham to become renowned for this.
        </blockquote>
        <p className="mt-[29px] text-base leading-6 font-light text-[#8b8b8b]">Caroline Hennigan, Programme Director, Broadway</p>
      </div>
      <div className="mt-[27px] flex h-2.5 items-center justify-center gap-[7px] pl-1">
        <button type="button" aria-label="Quote 1" className="size-1.5 rounded-full bg-[#c8ced2]" />
        <button type="button" aria-label="Quote 2" className="size-1.5 rounded-full bg-[#c8ced2]" />
        <button type="button" aria-label="Quote 3" className="size-1.5 rounded-full bg-[#c8ced2]" />
        <button type="button" aria-label="Quote 4" className="size-2.5 rounded-full border-2 border-[#bababa]" />
      </div>
    </section>
  );
}

function Option({ label, close = false }: { label: string; close?: boolean }) {
  return (
    <label className={close ? "flex h-5 items-center gap-[11px] text-sm" : "flex h-5 items-center gap-[18px] text-sm"}>
      <input type="checkbox" className="size-5 appearance-none rounded-xs bg-white checked:bg-[#0ca799]" />
      {label}
    </label>
  );
}

function SignUp() {
  return (
    <section className="bg-[#22262f] px-4 pt-[59px] pb-[91px] text-white">
      <h2 className="text-center text-[31px] leading-[47px] font-light">
        Would you like to sign up for our <span className="font-semibold">programme</span>?
        <br />
        Register your interest below
      </h2>
      <form className="mx-auto mt-7 w-[582px]" onSubmit={(e) => e.preventDefault()}>
        <div className="ml-[15px] flex items-center gap-1.5">
          <input
            type="email"
            aria-label="E-mail address"
            placeholder="Enter your e-mail address"
            className="h-[35px] w-[435px] shrink-0 rounded-xs bg-white px-4 pb-1 text-[13px] text-[#22262f] placeholder:text-[#22262f] placeholder:opacity-100"
          />
          <button type="submit" className="h-[38px] w-[141px] shrink-0 rounded-xs bg-[#0ca799] text-xs font-semibold text-white">
            SUBSCRIBE
          </button>
        </div>
        <p className="mt-[5px] pl-[179px] text-[11px] leading-4">
          or subscribe for our <a href="#" className="border-b border-white">newsletter</a>
        </p>
        <div className="mt-[69px] ml-[22px] grid grid-cols-[251px_1fr] gap-y-[25px]">
          <Option label="Daily newsletters" />
          <Option label="No promotions" close />
          <Option label="Industry specific events" />
          <Option label="Accessing New Markets" close />
        </div>
      </form>
    </section>
  );
}

function Footer() {
  return (
    <footer className="bg-white">
      <div className="mx-auto flex max-w-[1280px] pt-[25px] pb-[70px] pl-[94px] font-['Lato',sans-serif] text-xs leading-[18px] text-[#32363f]">
        <div className="w-[183px] shrink-0 font-['Open_Sans',sans-serif]">
          <Logo large />
        </div>
        <address className="w-[138px] shrink-0 not-italic">
          Crossraid
          <br />
          85/B Cross Street,
          <br />
          New York, USA
          <br />
          NA1 42SL
        </address>
        <div className="flex w-[157px] shrink-0 flex-col">
          <a href="#">(0039) 389 957 5552</a>
          <a href="#">support@revox.io</a>
        </div>
        <div className="flex w-[162px] shrink-0 flex-col">
          <span>COPYRIGHT © 2013</span>
          <a href="#">Privacy Policy</a>
          <a href="#">Design by Revox</a>
        </div>
        <div className="w-[249px] shrink-0">
          <h3 className="text-[11px] font-bold">RECRUITMENT</h3>
          <p className="mt-1 max-w-[220px] text-[11px]">We are frequently on the lookout for new talent!</p>
        </div>
        <div>
          <h3 className="text-[11px] font-bold">FOLLOW US</h3>
          <div className="mt-3.5 flex items-center gap-5 text-[#484848]">
            <a href="#" aria-label="Facebook"><FaFacebookF size={13} /></a>
            <a href="#" aria-label="Twitter">
              <svg width="13" height="13" viewBox="0 0 13 13" fill="none" stroke="currentColor" strokeWidth="3.5" strokeLinecap="round" strokeLinejoin="round">
                <path d="M4 2v6q0 3 3 3h3M4 5h6" />
              </svg>
            </a>
            <a href="#" aria-label="LinkedIn"><FaLinkedinIn size={12} /></a>
            <a href="#" aria-label="Tumblr">
              <svg width="13" height="13" viewBox="0 0 13 13" fill="none" stroke="currentColor" strokeWidth="2.4">
                <path d="M4 1v7q0 3 3.500 2.500M1 4.500h6" />
                <circle cx="10.500" cy="10.500" r="1.400" fill="currentColor" stroke="none" />
              </svg>
            </a>
            <a href="#" aria-label="RSS"><FaRss size={11} /></a>
            <a href="#" aria-label="Blogger"><FaBloggerB size={13} /></a>
          </div>
        </div>
      </div>
    </footer>
  );
}

export default function App() {
  return (
    <main className="bg-white font-['Open_Sans',sans-serif]">
      <Header />
      <Contact />
      <CityMap />
      <Testimonial />
      <SignUp />
      <Footer />
    </main>
  );
}
